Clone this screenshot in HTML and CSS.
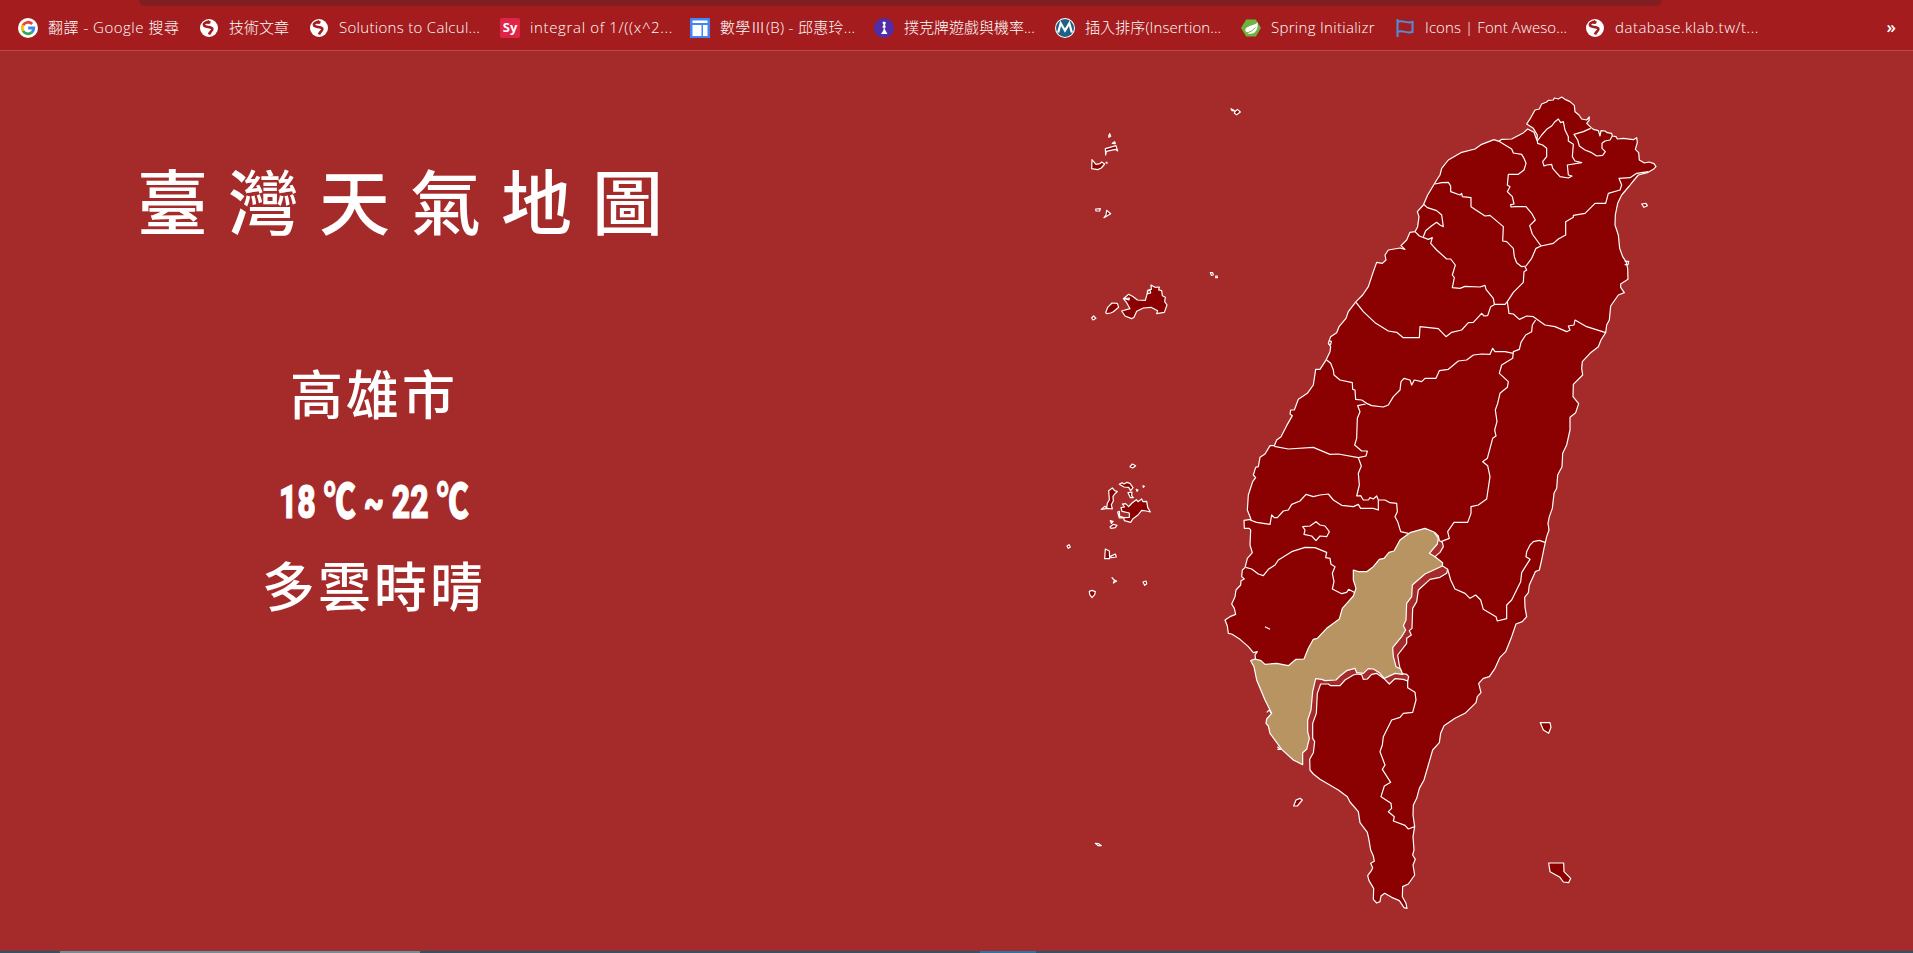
FILE: index.html
```html
<!DOCTYPE html>
<html lang="zh-Hant">
<head>
<meta charset="utf-8">
<title>臺灣天氣地圖</title>
<link rel="stylesheet" href="styles.css">
</head>
<body>
<svg class="defs" width="0" height="0" aria-hidden="true">
  <symbol id="globe" viewBox="0 0 20 20">
    <circle cx="10" cy="10" r="9" fill="#fff"/>
    <path d="M10.500 3C8 4.500 3.500 5 5.200 7.800 6.500 9.600 12 8.300 13.300 10.500 14.200 12.500 11 13.500 10 16.500" fill="none" stroke="#a51c1e" stroke-width="2.600"/>
    <path d="M9 3.200l3 .3-1 2.200-3 .3z" fill="#a51c1e"/>
  </symbol>
</svg>
<header class="bar">
  <div class="address"></div>
  <nav class="bookmarks">
    <a class="item"><svg class="icon" viewBox="0 0 20 20"><circle cx="10" cy="10" r="10" fill="#fff"/><g fill="none" stroke-width="2.800"><path d="M14.200 6A5.800 5.800 0 0 0 5 7.200" stroke="#ea4335"/><path d="M5 7.200A5.800 5.800 0 0 0 5 12.900" stroke="#fbbc05"/><path d="M5 12.900A5.800 5.800 0 0 0 13.800 14.400" stroke="#34a853"/><path d="M13.800 14.400A5.800 5.800 0 0 0 15.800 10H10.200" stroke="#4285f4"/></g></svg><span class="label wide">翻譯 - Google 搜尋</span></a>
    <a class="item"><svg class="icon"><use href="#globe"/></svg><span class="label">技術文章</span></a>
    <a class="item"><svg class="icon"><use href="#globe"/></svg><span class="label medium">Solutions to Calcul...</span></a>
    <a class="item"><span class="icon sy">Sy</span><span class="label wider">integral of 1/((x^2...</span></a>
    <a class="item"><svg class="icon" viewBox="0 0 20 20"><path d="M0 0h20v20H0z" fill="#4285f4"/><path d="M2.500 2.500h15V5h-15zM2.500 7h9v11h-9zM13 7h4.500v11H13z" fill="#fff"/></svg><span class="label medium">數學Ⅲ(B) - 邱惠玲...</span></a>
    <a class="item"><svg class="icon" viewBox="0 0 20 20"><circle cx="10" cy="10" r="10" fill="#512da8"/><path d="M9 3.500l3 .8-1 2.700.8 2-1.300 1.500 1 2 2 3.500H7l2.300-3.500.4-2.500-1.500-1 1.500-2-1.200-2z" fill="#fff"/></svg><span class="label">撲克牌遊戲與機率...</span></a>
    <a class="item"><svg class="icon" viewBox="0 0 20 20"><circle cx="10" cy="10" r="10" fill="#fff"/><circle cx="10" cy="10" r="9" fill="#1e6288"/><path d="M3.200 14.500L5.700 5.200 10 12.500l4.300-7.300 2.500 9.300" fill="none" stroke="#fff" stroke-width="2.200"/></svg><span class="label slight">插入排序(Insertion...</span></a>
    <a class="item"><svg class="icon" viewBox="0 0 20 20"><path d="M5.200 1.500h9.600L20 10l-5.200 8.500H5.200L0 10z" fill="#6db33f"/><path d="M16.500 4c.8 6-1 11-6.200 11.700-3 .4-5.200-1-5.800-2.800C3.500 7 14 8.500 16.500 4z" fill="#fff"/><path d="M5 15c4-.6 7-2.500 9.300-5.500" fill="none" stroke="#6db33f"/></svg><span class="label medium">Spring Initializr</span></a>
    <a class="item"><svg class="icon" viewBox="0 0 20 20"><path d="M2.500 1v18M2.500 4c5-3 7 2 15 0v10c-8 2-10-3-15 0" fill="none" stroke="#538dd7" stroke-width="2"/></svg><span class="label slight">Icons | Font Aweso...</span></a>
    <a class="item"><svg class="icon"><use href="#globe"/></svg><span class="label wide">database.klab.tw/t...</span></a>
    <span class="more">»</span>
  </nav>
</header>
<main class="page">
  <section class="info">
    <h1 class="title">臺灣天氣地圖</h1>
    <div class="weather">
      <h2 class="city">高雄市</h2>
      <p class="temp"><span class="temp-text">18 ℃ ~ 22 ℃</span></p>
      <p class="sky">多雲時晴</p>
    </div>
  </section>
  <svg class="map" viewBox="3150 210 1920 2580">
    <!-- main island -->
    <path class="land" d="M4583 387L4602 397 4611 422 4612 405 4600 385 4580 372 4593 352 4605 330 4618 327 4625 312 4640 306 4645 301 4660 300 4663 294 4675 297 4685 291 4697 299 4710 305 4723 316 4725 335 4737 345 4745 357 4760 360 4768 351 4767 362 4760 370 4773 382 4780 388 4795 392 4800 408 4803 392 4815 393 4822 398 4835 400 4837 408 4848 410 4852 417 4870 415 4900 419 4910 413 4912 427 4906 448 4916 458 4918 480 4933 489 4947 486 4962 491 4968 500 4960 508 4942 518 4915 525 4900 543 4888 558 4865 585 4853 610 4846 645 4845 675 4855 705 4859 745 4868 770 4878 785 4883 805 4884 838 4862 852 4862 862 4873 878 4855 885 4832 918 4828 960 4820 975 4817 998 4803 1020 4795 1040 4770 1060 4747 1085 4745 1105 4748 1125 4720 1153 4719 1190 4736 1211 4727 1238 4710 1252 4710 1290 4700 1335 4688 1360 4686 1400 4673 1425 4670 1465 4662 1480 4657 1525 4648 1550 4644 1570 4647 1590 4640 1610 4632 1645 4625 1680 4618 1710 4606 1715 4588 1755 4585 1778 4574 1792 4575 1822 4580 1850 4567 1865 4548 1872 4535 1910 4517 1955 4500 1972 4485 2005 4468 2030 4450 2035 4436 2050 4443 2078 4432 2090 4428 2108 4395 2140 4365 2155 4332 2177 4322 2200 4318 2228 4298 2250 4285 2295 4272 2340 4258 2365 4250 2395 4240 2415 4239 2445 4244 2480 4239 2510 4242 2550 4238 2565 4246 2578 4239 2595 4244 2625 4225 2652 4208 2660 4207 2690 4218 2710 4221 2725 4212 2723 4198 2702 4175 2692 4154 2680 4143 2688 4140 2705 4130 2709 4120 2698 4121 2665 4107 2642 4103 2627 4114 2612 4118 2603 4112 2590 4123 2584 4120 2568 4112 2550 4106 2515 4102 2497 4080 2468 4075 2435 4050 2406 4042 2390 4015 2370 3960 2338 3940 2322 3930 2310 3929 2278 3940 2258 3944 2225 3938 2215 3938 2170 3949 2140 3952 2080 3962 2052 3985 2052 3992 2057 4020 2057 4035 2040 4060 2025 4070 2022 4085 2024 4090 2038 4102 2037 4115 2023 4130 2020 4152 2036 4168 2052 4185 2036 4210 2038 4223 2043 4226 2030 4220 2023 4203 2020 4197 1990 4193 1965 4220 1930 4220 1915 4234 1905 4228 1892 4236 1885 4238 1825 4250 1805 4255 1770 4290 1738 4320 1732 4340 1720 4343 1708 4328 1698 4305 1670 4320 1657 4330 1640 4327 1627 4318 1622 4315 1608 4305 1598 4250 1605 4150 1750 4050 1850 3900 2000 3800 2020 3770 2000 3765 1965 3772 1955 3760 1958 3745 1940 3720 1918 3695 1902 3685 1900 3682 1878 3675 1860 3690 1850 3707 1843 3703 1825 3695 1812 3705 1790 3708 1770 3722 1755 3723 1742 3733 1737 3725 1730 3727 1710 3735 1703 3742 1675 3757 1658 3750 1635 3752 1590 3748 1585 3733 1585 3732 1561 3753 1558 3742 1530 3745 1485 3758 1445 3767 1433 3760 1425 3767 1402 3775 1400 3780 1372 3795 1362 3810 1337 3823 1337 3830 1320 3843 1310 3860 1277 3877 1247 3870 1242 3872 1230 3883 1230 3895 1198 3922 1180 3940 1155 3947 1108 3960 1108 3977 1082 3990 1055 3992 1040 3985 1030 3992 1010 4010 998 4017 980 4038 955 4045 935 4068 905 4088 885 4105 860 4120 815 4130 787 4147 790 4158 780 4155 765 4165 750 4200 744 4215 748 4203 737 4220 720 4230 697 4245 695 4253 680 4257 650 4252 635 4270 615 4283 585 4292 570 4310 540 4320 525 4325 505 4345 480 4385 457 4425 447 4445 433 4482 419 4497 424 4505 418 4535 417 4568 400Z"/>
    <!-- county borders -->
    <g class="border">
      <path d="M4612 423L4625 405 4640 388 4655 378 4665 365 4675 357 4682 368 4690 365 4695 390 4705 410 4705 423 4720 433 4717 470 4725 483 4745 488 4702 495 4705 525 4716 528 4705 534 4680 530 4658 505 4655 493 4640 495 4632 498 4628 485 4640 470 4640 445 4628 435 4613 430Z"/>
      <path d="M4772 385L4750 395 4722 403 4733 420 4738 438 4755 450 4775 458 4790 468 4808 466 4816 455 4806 445 4806 430 4815 423 4830 420 4837 408"/>
      <path d="M4497 424L4520 438 4535 447 4540 459 4565 463 4572 475 4578 490 4572 510 4555 523 4525 523 4522 555 4530 560 4522 575 4537 590 4542 612 4532 614 4533 621 4545 620 4578 620 4595 640 4606 660 4589 677 4597 702 4623 738"/>
      <path d="M4623 738L4660 730 4675 717 4697 705 4697 665 4720 652 4720 646 4755 640 4785 610 4817 610 4825 580 4860 570 4865 555 4857 535 4890 533 4910 520 4945 515"/>
      <path d="M4305 552L4325 548 4345 547 4352 558 4352 575 4380 585 4385 580 4387 590 4413 593 4413 620 4455 648 4470 646 4510 680 4508 723 4520 725 4540 745 4543 770 4550 788 4565 800 4578 798 4595 775 4608 745 4623 738"/>
      <path d="M4270 612L4282 623 4310 632 4325 645 4330 680 4320 675 4310 667 4295 677 4277 692 4270 710"/>
      <path d="M4245 695L4258 708 4285 718 4297 713 4292 730 4310 750 4340 777 4352 777 4366 795 4357 825 4363 833 4357 863 4380 865 4395 859 4440 861 4455 856 4458 868 4480 895 4483 913 4515 913 4522 905 4540 877 4570 847 4572 815 4580 810 4575 800"/>
      <path d="M4068 907L4090 935 4125 968 4165 993 4190 997 4210 1013 4258 1013 4260 980 4315 986 4338 1010 4355 997 4385 990 4405 968 4420 967 4445 940 4452 948 4463 947 4472 920 4483 914"/>
      <path d="M4522 905L4527 940 4540 942 4558 958 4580 948 4600 950 4635 975 4665 980 4700 995 4710 990 4705 978 4722 975 4725 960 4760 980 4817 998"/>
      <path d="M4607 960L4597 975 4595 995 4577 1005 4563 1027 4558 1048 4540 1055 4538 1075 4505 1095 4498 1120 4525 1145 4522 1162 4500 1180 4493 1210 4486 1230 4491 1265 4484 1290 4488 1308 4478 1315 4462 1375 4448 1385 4463 1397 4470 1430 4460 1497 4435 1515 4413 1520 4413 1540 4403 1567 4362 1567 4343 1595 4348 1615 4323 1625"/>
      <path d="M4540 1060L4515 1055 4485 1055 4478 1045 4470 1063 4445 1062 4420 1065 4400 1080 4375 1083 4345 1108 4318 1112 4308 1135 4275 1135 4265 1145 4243 1140 4235 1155 4230 1140 4212 1135 4203 1145 4200 1170 4180 1190 4165 1215 4150 1221 4115 1217 4100 1210 4085 1200 4067 1198 4065 1170 4058 1168 4057 1148 4020 1140 4002 1125 4000 1110 3992 1090 3980 1080"/>
      <path d="M4097 1212L4073 1217 4080 1235 4072 1255 4070 1315 4064 1335 4085 1353 4102 1353 4098 1368 4075 1373 4015 1362 3990 1363 3940 1342 3865 1347 3823 1339"/>
      <path d="M4075 1373L4084 1398 4075 1420 4078 1455 4070 1488 4082 1487 4090 1500 4105 1500 4110 1493 4120 1497 4130 1488 4135 1500 4135 1530 4120 1525 4082 1525 4075 1513 4060 1520 4025 1516 4000 1500 3985 1482 3960 1485 3940 1490 3918 1483 3900 1503 3875 1513 3865 1530 3850 1533 3832 1553 3823 1553 3815 1545 3810 1573 3770 1567 3750 1560"/>
      <path d="M4135 1500L4155 1500 4170 1508 4190 1510 4192 1535 4185 1550 4193 1565 4202 1595 4225 1600"/>
      <path d="M3908 1580L3930 1578 3948 1565 3960 1575 3975 1578 3988 1595 3980 1610 3960 1608 3948 1622 3935 1608 3912 1603 3915 1590Z"/>
      <path d="M3737 1702L3755 1707 3775 1722 3790 1727 3805 1708 3825 1695 3835 1680 3875 1655 3915 1642 3945 1643 3980 1657 3977 1673 3990 1675 3993 1693 4005 1700 3997 1720 4002 1745 3997 1767 4025 1781 4040 1777 4046 1768 4062 1777"/>
      <path d="M4343 1708L4352 1740 4365 1767 4395 1780 4410 1795 4427 1785 4442 1800 4450 1828 4488 1850 4492 1863 4520 1856 4520 1815 4535 1800 4562 1745 4565 1718 4590 1678 4578 1670 4580 1655 4590 1635 4600 1625 4618 1621 4635 1627"/>
      <path d="M4223 2043L4223 2063 4245 2077 4248 2100 4238 2137 4210 2140 4200 2152 4175 2160 4150 2210 4147 2235 4140 2255 4155 2295 4147 2308 4172 2347 4153 2358 4143 2390 4173 2410 4175 2425 4165 2435 4183 2450 4180 2463 4215 2476 4225 2487 4244 2480"/>
      <path d="M3795 1880L3810 1888"/>
      <path d="M3986 1022L3994 1024 3992 1034 3986 1032M4874 784L4886 784 4884 794 4874 794M3762 2010L3768 2012 3768 2022M3800 2137L3808 2130 3813 2140M3832 2240L3842 2248 3832 2248"/>
    </g>
    <!-- selected county -->
    <path class="land selected" d="M3752 1982L3765 1977 3783 1982 3795 1993 3830 1990 3865 1997 3888 1978 3912 1977 3925 1945 3940 1918 3952 1915 3980 1885 4018 1857 4027 1825 4045 1805 4060 1788 4068 1765 4060 1740 4060 1710 4075 1715 4100 1715 4120 1700 4138 1678 4152 1675 4167 1657 4182 1653 4200 1620 4230 1598 4275 1585 4302 1596 4315 1615 4312 1632 4288 1660 4305 1670 4328 1688 4327 1698 4275 1722 4237 1755 4235 1790 4220 1810 4218 1860 4210 1877 4217 1890 4205 1910 4178 1943 4180 1970 4188 2000 4202 2007 4208 2023 4185 2020 4153 2035 4138 2018 4120 2007 4105 2006 4090 2020 4070 2018 4065 2005 4040 2012 4020 2028 4008 2040 3975 2042 3965 2038 3947 2036 3938 2075 3933 2130 3923 2160 3923 2195 3928 2215 3920 2248 3908 2258 3908 2294 3880 2280 3845 2248 3810 2200 3805 2178 3798 2170 3800 2157 3815 2140 3795 2100 3770 2040 3762 2000Z"/>
    <!-- outlying islands -->
    <path class="land" d="M3881 2418L3888 2400 3900 2395 3907 2400 3892 2418ZM4621 2168L4650 2168 4653 2182 4646 2200 4630 2190ZM4646 2589L4691 2589 4692 2615 4712 2635 4706 2648 4690 2646 4680 2632 4650 2615ZM4925 612L4938 610 4942 617 4932 622ZM3286 2530L3296 2531 3304 2537 3294 2537Z"/>
    <g class="land" transform="translate(3150 270)">
      <path d="M543 56L550 60 556 64 562 58 571 66 560 74 553 70 556 63 546 62ZM176 138L179 131 182 139 177 142ZM187 160L194 155 196 161ZM166 176L198 167 203 183 196 178 169 184 167 195ZM126 209L138 223 150 221 155 216 164 222 154 234 143 239 125 236ZM168 217l3 0 0 3zM137 357L151 356 149 363 138 363ZM170 361L182 371 162 383 168 375ZM481 548L488 548 490 555 484 556ZM497 558l5 0 0 5-5 0z"/>
      <path d="M215 663L240 656 230 638 220 626 236 613 250 620 262 630 286 631 290 617 294 600 304 598 303 585 315 592 328 591 326 600 335 602 337 617 346 622 344 635 351 645 343 667 320 671 323 662 303 652 280 654 260 664 252 682 245 686 225 678ZM167 668L173 652 186 639 202 640 206 652 190 665 182 669 170 671ZM125 684L131 678 138 685 129 690ZM224 626L238 624 237 630ZM292 604L300 600 302 609 294 611Z"/>
    </g>
    <g class="land" transform="translate(3150 1350)">
      <path d="M240 50L247 42 257 47 248 54ZM208 103L216 98 222 102 231 97 240 100 249 113 242 122 236 112 222 111ZM259 118l5 2-3 4zM279 107l4 2-3 3zM234 128L246 126 245 137 250 143 241 143ZM176 122L187 114 194 122 202 125 194 132 189 139 190 153 184 164 187 177 172 175 154 178 164 169 170 173 172 160 178 149Z"/>
      <path d="M217 162L227 161 236 170 246 159 259 149 264 155 275 147 279 155 290 154 293 172 301 186 289 183 275 181 264 195 249 206 242 217 223 212 221 203 238 202 238 189 216 184 213 173 224 171ZM203 186L208 184 209 199 222 203 208 204ZM181 212l8 2-5 6zM180 231L190 223 201 226 196 233 183 235ZM51 288L57 284 61 291 55 295ZM166 297L178 303 179 326 164 326ZM181 319L196 312 199 321 184 323ZM186 383L192 390 200 393 190 399 194 391ZM279 396L288 393 290 401 284 406ZM118 424L126 421 136 425 134 434 126 443 119 433Z"/>
    </g>
  </svg>
</main>
<footer class="taskbar"><span class="task active"></span><span class="task running"></span></footer>
</body>
</html>
```
FILE: styles.css
```css
* { box-sizing: border-box; }

body {
  margin: 0;
  height: 953px;
  overflow: hidden;
  display: flex;
  flex-direction: column;
  background: #a52a2a;
  color: #fff;
  font-family: "Noto Sans CJK TC", "Noto Sans", sans-serif;
}

.defs { position: absolute; }

.bar {
  flex: none;
  height: 51px;
  background: #a51c1e;
  border-bottom: 1px solid #b94d4d;
}

.address {
  height: 6px;
  margin: 0 251px 0 139px;
  background: #821e1f;
  border-radius: 0 0 12px 12px;
}

.bookmarks {
  display: grid;
  grid-template-columns: 181px 110px 191px 190px 184px 181px 186px 154px 190px 1fr auto;
  align-items: center;
  height: 44px;
  padding: 0 17px 0 18px;
}

.item {
  display: flex;
  align-items: center;
  gap: 10px;
  white-space: nowrap;
}

.icon { flex: none; width: 20px; height: 20px; }

.sy {
  border-radius: 2px;
  background: #df2447;
  font: 700 13px/19px "Open Sans", sans-serif;
  text-align: center;
}

.label {
  padding-bottom: 2px;
  font: 300 15px/22px "Open Sans", "Noto Sans CJK TC", sans-serif;
}

.slight { letter-spacing: .1px; }
.medium { letter-spacing: .3px; }
.wide { letter-spacing: .5px; }
.wider { letter-spacing: .65px; }

.more {
  padding-bottom: 3px;
  font: 600 17px/20px "Open Sans", sans-serif;
}

.page {
  flex: 1;
  display: flex;
  min-height: 0;
}

.info { width: 1050px; padding-left: 137px; }

.title {
  margin: 95px 0 0;
  font-size: 71px;
  line-height: 104px;
  font-weight: 500;
  letter-spacing: 20px;
}

.weather {
  width: 474px;
  margin-top: 100px;
  text-align: center;
}

.city, .sky {
  margin: 0;
  font-size: 53px;
  line-height: 84px;
  font-weight: 500;
  letter-spacing: 3px;
}

.temp {
  margin: 25px 0 -3px;
  height: 86px;
  font: 900 47px/86px Roboto, "Noto Sans CJK TC", sans-serif;
}

.temp-text {
  display: inline-block;
  white-space: nowrap;
  transform: scaleX(.68);
  -webkit-text-stroke: 1px #fff;
}

.map {
  flex: none;
  width: 640px;
  height: 860px;
  margin-top: 19px;
}

.land, .border {
  fill: #8b0000;
  stroke: #fff;
  stroke-width: 3.6;
  stroke-linejoin: round;
}

.border { fill: none; }

.selected { fill: #b89463; }

.taskbar {
  flex: none;
  display: flex;
  gap: 560px;
  height: 2px;
  padding-left: 60px;
  background: #2b5470;
}

.task { height: 2px; }
.active { width: 360px; background: #6d909d; }
.running { width: 56px; background: #2a75a3; }
```
